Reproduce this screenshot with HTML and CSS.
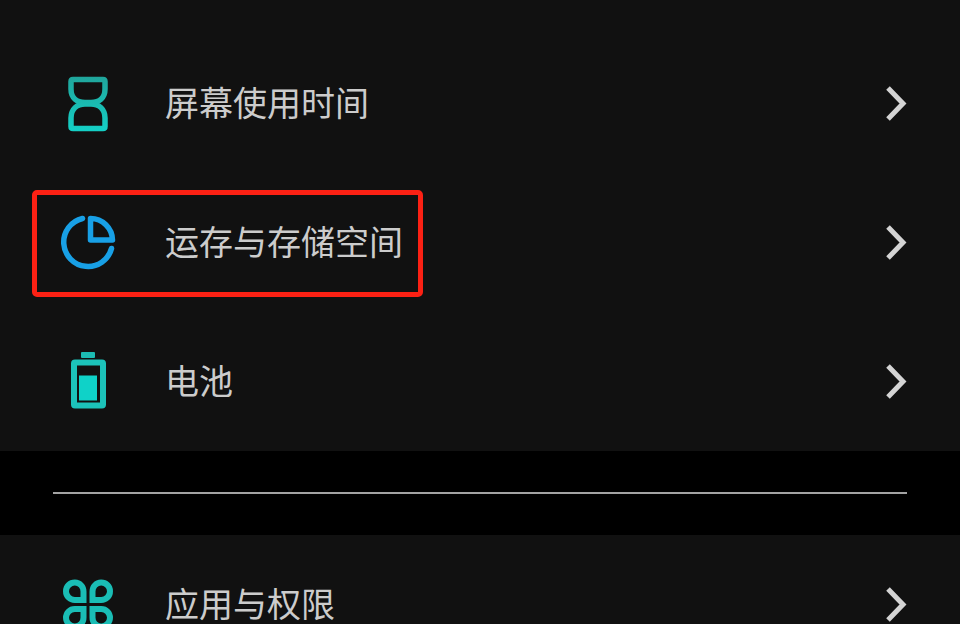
FILE: index.html
```html
<!DOCTYPE html>
<html lang="zh-CN">
<head>
  <meta charset="UTF-8">
  <meta name="viewport" content="width=device-width, initial-scale=1">
  <title>设置</title>
  <link rel="stylesheet" href="styles.css">
</head>
<body>
<nav class="settings">
  <div class="group group-first">
    <a class="row" href="#screen-time">
      <svg class="icon" viewBox="0 0 60 61" fill="none" stroke-width="5.500" aria-hidden="true">
        <defs>
          <linearGradient id="teal" gradientUnits="userSpaceOnUse" x1="0" y1="4" x2="0" y2="58">
            <stop offset="0" stop-color="#20a69c"/>
            <stop offset="1" stop-color="#14d0c6"/>
          </linearGradient>
        </defs>
        <path stroke="url(#teal)" d="M15 6.500H45Q47 6.500 47 8.500V16C47 25 41 29.500 33 29.500H27C19 29.500 13 25 13 16V8.500Q13 6.500 15 6.500Z"/>
        <path stroke="url(#teal)" d="M15 55.500H45Q47 55.500 47 53.500V45C47 36 41 31 33 31H27C19 31 13 36 13 45V53.500Q13 55.500 15 55.500Z"/>
      </svg>
      <span class="label">屏幕使用时间</span>
      <svg class="arrow" viewBox="0 0 24 41" aria-hidden="true"><path d="M4 5L19 20.500L4 36"/></svg>
    </a>
    <a class="row marked" href="#storage">
      <svg class="icon" viewBox="0 0 60 61" fill="none" stroke="#18a0e6" stroke-width="5.500" stroke-linecap="round" stroke-linejoin="round" aria-hidden="true">
        <path d="M24.500 6.500A24.300 24.300 0 1 0 53.500 36.500"/>
        <path d="M32.500 6.500V28H54.500A22 22 0 0 0 32.500 6.500Z"/>
      </svg>
      <span class="label">运存与存储空间</span>
      <svg class="arrow" viewBox="0 0 24 41" aria-hidden="true"><path d="M4 5L19 20.500L4 36"/></svg>
    </a>
    <a class="row" href="#battery">
      <svg class="icon" viewBox="0 0 60 61" aria-hidden="true">
        <rect x="23" y="1" width="14" height="6" rx="1" fill="#1cbdb4"/>
        <rect x="16" y="11.500" width="29" height="43" rx="1" fill="none" stroke="#1cc3ba" stroke-width="6" stroke-linejoin="round"/>
        <rect x="21" y="24.500" width="18" height="25" fill="#0fd2c8"/>
      </svg>
      <span class="label">电池</span>
      <svg class="arrow" viewBox="0 0 24 41" aria-hidden="true"><path d="M4 5L19 20.500L4 36"/></svg>
    </a>
  </div>
  <hr class="divider">
  <div class="group">
    <a class="row" href="#apps">
      <svg class="icon" viewBox="0 0 60 61" fill="none" stroke="#1abdb5" stroke-width="6" aria-hidden="true">
        <path d="M25.500 26V17.500A8.750 8.750 0 1 0 16.750 26Z"/>
        <path d="M34.500 26V17.500A8.750 8.750 0 1 1 43.250 26Z"/>
        <path d="M25.500 35V43.500A8.750 8.750 0 1 1 16.750 35Z"/>
        <path d="M34.500 35V43.500A8.750 8.750 0 1 0 43.250 35Z"/>
      </svg>
      <span class="label">应用与权限</span>
      <svg class="arrow" viewBox="0 0 24 41" aria-hidden="true"><path d="M4 5L19 20.500L4 36"/></svg>
    </a>
  </div>
</nav>
</body>
</html>
```

FILE: styles.css
```css
body {
  margin: 0;
  background: #111;
  color: #ccc;
  font-family: "Noto Sans CJK SC", sans-serif;
  overflow: hidden;
}

.group-first { padding-top: 34px; }

.row {
  position: relative;
  display: flex;
  align-items: center;
  height: 139px;
  padding: 0 52px 0 58px;
  box-sizing: border-box;
  color: inherit;
  text-decoration: none;
}

.icon {
  flex: none;
  width: 60px;
  height: 61px;
}

.label {
  flex: 1;
  margin-left: 47px;
  padding-bottom: 4px;
  font-size: 34px;
  font-weight: 400;
  line-height: 36px;
}

.arrow {
  flex: none;
  width: 24px;
  height: 41px;
  fill: none;
  stroke: #d4d4d4;
  stroke-width: 5;
}

/* red frame over the storage row */
.marked::after {
  content: "";
  position: absolute;
  top: 17px;
  left: 32px;
  width: 391px;
  height: 107px;
  box-sizing: border-box;
  border: 5px solid #fc2114;
  border-radius: 5px;
}

.divider {
  margin: 0;
  padding: 41px 53px;
  border: 0;
  background: #000;
}

.divider::before {
  content: "";
  display: block;
  height: 2px;
  background: #a3a3a3;
}
```
